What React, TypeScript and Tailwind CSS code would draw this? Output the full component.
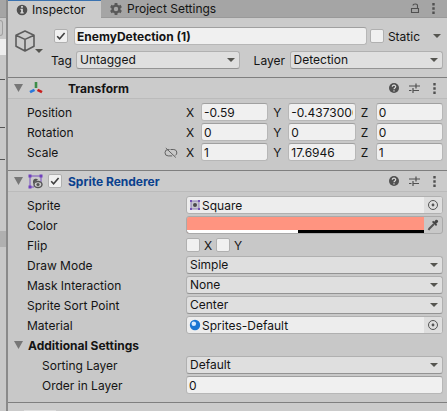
import { useState } from "react";
import type { ReactNode } from "react";

function Arrow({ className = "" }: { className?: string }) {
  return (
    <svg viewBox="0 0 8 4" className={`h-1 w-2 shrink-0 fill-[#555550] ${className}`} aria-hidden="true">
      <path d="M0 0h8L4 4z" />
    </svg>
  );
}

function Tick({ label, checked = false, id }: { label: string; checked?: boolean; id?: string }) {
  const [on, setOn] = useState(checked);
  return (
    <span className="relative flex h-3.5 w-3.5 shrink-0">
      <input
        id={id}
        type="checkbox"
        aria-label={label}
        checked={on}
        onChange={() => setOn(!on)}
        className="h-3.5 w-3.5 appearance-none rounded-xs border border-[#b0b0b0] bg-[#f0f0f0]"
      />
      {on && (
        <svg viewBox="0 0 14 14" className="pointer-events-none absolute inset-0" aria-hidden="true">
          <path d="M3.2 7.2l2.4 2.5 5-5.7" fill="none" stroke="#3f3f3f" strokeWidth="1.6" />
        </svg>
      )}
    </span>
  );
}

function Dropdown({ id, value, grow = "flex-1" }: { id: string; value: string; grow?: string }) {
  return (
    <span className={`relative flex min-w-0 items-center ${grow}`}>
      <select
        id={id}
        defaultValue={value}
        className="h-[18px] w-full appearance-none rounded-[3px] border border-[#b0b0b0] border-b-[#939393] bg-[#dfdfdf] pr-4 pl-[3px] leading-4"
      >
        <option>{value}</option>
      </select>
      <Arrow className="pointer-events-none absolute right-[5px]" />
    </span>
  );
}

function TextBox({ id, label, value, className = "" }: { id?: string; label?: string; value: string; className?: string }) {
  return (
    <input
      id={id}
      aria-label={label}
      defaultValue={value}
      className={`h-[18px] w-0 min-w-0 flex-1 rounded-[3px] border border-[#b7b7b7] border-t-[#a0a0a0] bg-[#f0f0f0] px-0.5 pt-px leading-4 ${className}`}
    />
  );
}

function ObjectField({ id, value, icon }: { id: string; value: string; icon: ReactNode }) {
  return (
    <span className="flex h-[18px] min-w-0 flex-1 items-center overflow-hidden rounded-[3px] border border-[#b0b0b0] bg-[#ededed]">
      <span className="ml-0.5 h-3 w-3 shrink-0">{icon}</span>
      <input id={id} readOnly defaultValue={value} className="h-4 w-0 min-w-0 flex-1 bg-transparent pt-px pl-px leading-4" />
      <button type="button" aria-label={`Select ${value}`} className="flex h-4 w-[18px] items-center justify-center bg-[#dedede]">
        <svg viewBox="0 0 12 12" className="h-3 w-3" aria-hidden="true">
          <circle cx="6" cy="6" r="4.5" fill="none" stroke="#555" />
          <circle cx="6" cy="6" r="1.4" fill="#555" />
        </svg>
      </button>
    </span>
  );
}

function Row({ label, id, indent = false, children }: { label: string; id?: string; indent?: boolean; children: ReactNode }) {
  return (
    <div className="flex h-[18px] items-center">
      <label htmlFor={id} className={`w-[178px] shrink-0 pt-px ${indent ? "pl-[34px]" : "pl-[19px]"}`}>
        {label}
      </label>
      {children}
    </div>
  );
}

function VectorRow({ label, values, link = false }: { label: string; values: string[]; link?: boolean }) {
  return (
    <div role="group" aria-label={label} className="flex h-[18px] items-center">
      <span className="flex w-[178px] shrink-0 items-center justify-between pt-px pr-2 pl-[19px]">
        {label}
        {link && (
          <button type="button" aria-label="Constrain proportions">
            <svg viewBox="0 0 14 12" className="h-3 w-3.5" fill="none" stroke="#626262" aria-hidden="true">
              <path d="M5.5 2.5H4.2a3.2 3.2 0 0 0 0 6.4h4M6.5 2.5h3.3a3.2 3.2 0 0 1 1.4 6M1.8 1l10 9.5" />
            </svg>
          </button>
        )}
      </span>
      <span className="flex min-w-0 flex-1 gap-[5px]">
        {["X", "Y", "Z"].map((axis, i) => (
          <label key={axis} className="flex min-w-0 flex-1 items-center">
            <span className="w-[15px] shrink-0 pt-px">{axis}</span>
            <TextBox value={values[i]} />
          </label>
        ))}
      </span>
    </div>
  );
}

function Dots() {
  return (
    <button type="button" aria-label="More" className="flex w-3 justify-center">
      <svg viewBox="0 0 3 11" className="h-[11px] w-[3px] fill-[#505050]" aria-hidden="true">
        <path d="M.3 0h2.4v2.4H.3zM.3 4.3h2.4v2.4H.3zM.3 8.6h2.4V11H.3z" />
      </svg>
    </button>
  );
}

function Fold({ label }: { label: string }) {
  return (
    <button type="button" aria-label={`Collapse ${label}`} className="flex w-[9px] shrink-0">
      <svg viewBox="0 0 9 8" className="h-2 w-[9px] fill-[#777]" aria-hidden="true">
        <path d="M0 0h9L4.5 8z" />
      </svg>
    </button>
  );
}

function SectionHeader({ title, icon, children, blue = false }: { title: string; icon: ReactNode; children?: ReactNode; blue?: boolean }) {
  return (
    <header className="flex h-[22px] items-center border-t border-t-[#7f7f7f] border-b border-b-[#bbbbbb] bg-[#cbcbcb] pr-[7px] pl-1.5">
      <Fold label={title} />
      <span className="ml-[5px] flex w-10 shrink-0 items-center gap-[5px]">
        {icon}
        {children}
      </span>
      <h2 className={`flex-1 pt-px font-bold ${blue ? "text-[#0a418e]" : ""}`}>{title}</h2>
      <span className="flex items-center gap-2">
        <button type="button" aria-label="Help">
          <svg viewBox="0 0 12 12" className="h-3 w-3" aria-hidden="true">
            <circle cx="6" cy="6" r="5" fill="#505050" />
            <path d="M4.3 4.8c0-2.3 3.5-2.1 3.4 0C7.7 6 6 5.8 6 7.2M6 8.2v1.2" fill="none" stroke="#ddd" strokeWidth="1.2" />
          </svg>
        </button>
        <button type="button" aria-label="Presets">
          <svg viewBox="0 0 12 12" className="h-3 w-3" fill="none" stroke="#505050" strokeWidth="1.2" aria-hidden="true">
            <path d="M1 4h6.5M8 4H12M8 1.5v5M1 8.5h2.5M5 8.5H11M5 6v5" />
          </svg>
        </button>
        <Dots />
      </span>
    </header>
  );
}

function SpriteIcon() {
  return (
    <svg viewBox="0 0 12 12" className="h-3 w-3" aria-hidden="true">
      <path d="M2 2h8v8H2z" fill="#c9c6d2" stroke="#8b7db2" />
      <path d="M1 1h2v2H1zM9 1h2v2H9zM1 9h2v2H1zM9 9h2v2H9z" fill="#7350b5" />
      <circle cx="6" cy="6" r="2" fill="#4a4a4a" />
    </svg>
  );
}

function ScenePanel() {
  return (
    <aside className="flex w-1.5 shrink-0 flex-col bg-[#c8c8c8]">
      <div className="h-[18px] border-b border-[#999] bg-[#a5a5a5]" />
      <div className="mt-[2px] mr-[3px] h-4 rounded-r-md border border-l-0 border-[#a0a0a0]" />
      <div className="mt-[3px] h-4 bg-[#ededed]" />
      <div className="mt-6 h-px w-[5px] bg-[#555]" />
      <div className="mt-[47px] h-px w-[5px] bg-[#555]" />
      <div className="mt-[31px] h-px w-[5px] bg-[#555]" />
      <div className="mt-[71px] h-4 bg-[#b0b0b0]" />
    </aside>
  );
}

export default function App() {
  return (
    <div className="flex min-h-screen bg-[#c8c8c8] font-['Inter',sans-serif] text-xs leading-4 text-[#141414]">
      <ScenePanel />
      <main className="min-w-0 flex-1 border-l-2 border-[#8a8a8a]">
        <nav className="flex h-[18px] items-stretch border-b border-[#999] bg-[#a5a5a5]">
          <button type="button" className="-mb-px flex w-[93px] items-center gap-1 border-t border-[#3a72b0] bg-[#cbcbcb] pl-2 leading-4">
            <svg viewBox="0 0 12 12" className="h-3 w-3 shrink-0" aria-hidden="true">
              <circle cx="6" cy="6" r="5.3" fill="#505050" />
              <path d="M5.1 2h1.8v1.7H5.1zM4.5 4.8h2.4v3.5h.8v1.2H4.3V8.3h.8V6h-.6z" fill="#d8d8d8" />
            </svg>
            Inspector
          </button>
          <button type="button" className="flex items-center gap-1 pt-px pl-2 leading-4">
            <svg viewBox="0 0 14 14" className="h-3.5 w-3.5 shrink-0" fill="none" stroke="#595959" aria-hidden="true">
              <circle cx="7" cy="7" r="3.4" strokeWidth="2.4" />
              <path d="M7 1v2M7 11v2M1.8 4l1.7 1M10.5 9l1.7 1M1.8 10l1.7-1M10.5 5l1.7-1" strokeWidth="2.8" />
            </svg>
            Project Settings
          </button>
          <span className="ml-auto flex items-center gap-[7px] pr-2">
            <button type="button" aria-label="Lock">
              <svg viewBox="0 0 10 11" className="h-[11px] w-2.5" fill="none" stroke="#505050" aria-hidden="true">
                <path d="M1.5 5.5h7v4h-7zM3 2.5c0-2 4.5-2 4.5 0v3" strokeWidth="1.1" />
              </svg>
            </button>
            <Dots />
          </span>
        </nav>

        <section className="flex bg-[#cbcbcb] pt-[9px] pb-2" aria-label="Game object">
          <button type="button" aria-label="Object icon" className="flex h-[26px] w-[43px] shrink-0 items-end pl-1.5">
            <svg viewBox="0 0 22 24" className="h-6 w-[22px] shrink-0" fill="none" stroke="#5c5c5c" strokeWidth="1.6" strokeLinejoin="round" aria-hidden="true">
              <path d="M11 2l9 4.2v11L11 22l-9-4.8v-11zM2 6.2l9 4.2 9-4.2M11 10.4V22" />
            </svg>
            <Arrow className="-ml-px" />
          </button>
          <div className="flex min-w-0 flex-1 flex-col gap-1.5 pr-1">
            <div className="flex h-[18px] items-center pl-[3px]">
              <Tick label="Active" checked />
              <TextBox label="Name" value="EnemyDetection (1)" className="ml-1.5 font-bold" />
              <span className="ml-[3px] flex items-center gap-1">
                <Tick label="Static" id="static" />
                <label htmlFor="static" className="pt-px">Static</label>
              </span>
              <button type="button" aria-label="Static options" className="mr-0.5 ml-[13px]">
                <Arrow />
              </button>
            </div>
            <div className="flex h-[18px] items-center">
              <label htmlFor="tag" className="w-[25px] shrink-0 pt-px">Tag</label>
              <Dropdown id="tag" value="Untagged" grow="flex-16" />
              <label htmlFor="layer" className="w-[50px] shrink-0 pt-px pl-3.5">Layer</label>
              <Dropdown id="layer" value="Detection" grow="flex-15" />
            </div>
          </div>
        </section>

        <section>
          <SectionHeader
            title="Transform"
            icon={
              <svg viewBox="0 0 16 16" className="h-4 w-4 shrink-0" fill="none" strokeWidth="2.6" aria-hidden="true">
                <path d="M8 2v6" stroke="#3c8c48" />
                <path d="M6.5 9.8L2 12.2" stroke="#2878dc" />
                <path d="M9.5 9.8l4.5 2.4" stroke="#c81e1e" />
              </svg>
            }
          />
          <div className="flex flex-col gap-0.5 pt-1 pr-1 pb-[9px]">
            <VectorRow label="Position" values={["-0.59", "-0.4373006", "0"]} />
            <VectorRow label="Rotation" values={["0", "0", "0"]} />
            <VectorRow label="Scale" values={["1", "17.6946", "1"]} link />
          </div>
        </section>

        <section>
          <SectionHeader
            title="Sprite Renderer"
            blue
            icon={
              <svg viewBox="0 0 15 15" className="h-[15px] w-[15px] shrink-0" aria-hidden="true">
                <path d="M2 2h11v7M2 2v11h4" fill="none" stroke="#7950be" />
                <path d="M.5.5h3v3h-3zM11.5.5h3v3h-3zM.5 11.5h3v3h-3z" fill="#7040bd" />
                <path d="M5 7a3 3 0 0 1 5-1.5L7 8l-2 2z" fill="#555" />
                <ellipse cx="10" cy="10.5" rx="4" ry="3" fill="#ccc" stroke="#555" strokeWidth="1.4" />
                <circle cx="10" cy="10.5" r="1.6" fill="#555" />
              </svg>
            }
          >
            <Tick label="Sprite Renderer enabled" checked />
          </SectionHeader>
          <div className="flex flex-col gap-0.5 border-b border-[#7f7f7f] pt-1 pr-1 pb-2">
            <Row label="Sprite" id="sprite">
              <ObjectField id="sprite" value="Square" icon={<SpriteIcon />} />
            </Row>
            <Row label="Color" id="color">
              <span className="flex h-[18px] min-w-0 flex-1 overflow-hidden rounded-[3px] border border-[#aaa]">
                <button id="color" type="button" className="flex flex-1 flex-col bg-[#ff9480]">
                  <span className="mt-auto flex h-[3px] w-full bg-black">
                    <span className="w-[47%] bg-white" />
                  </span>
                </button>
                <button type="button" aria-label="Pick color" className="flex w-[18px] items-center justify-center">
                  <svg viewBox="0 0 12 12" className="h-3 w-3" aria-hidden="true">
                    <path d="M7 5L2.5 9.5l-1 1.5" fill="none" stroke="#555" strokeWidth="2" />
                    <path d="M5 3l4 4 1.2-1.2-1-1 1.6-1.6c1.2-1.3-.9-3.4-2.2-2.2L7.2 2.8l-1-1z" fill="#444" />
                  </svg>
                </button>
              </span>
            </Row>
            <Row label="Flip">
              <span className="flex items-center">
                <Tick label="Flip X" id="flip-x" />
                <label htmlFor="flip-x" className="w-4 pt-px pl-1">X</label>
                <Tick label="Flip Y" id="flip-y" />
                <label htmlFor="flip-y" className="pt-px pl-1">Y</label>
              </span>
            </Row>
            <Row label="Draw Mode" id="draw">
              <Dropdown id="draw" value="Simple" />
            </Row>
            <Row label="Mask Interaction" id="mask">
              <Dropdown id="mask" value="None" />
            </Row>
            <Row label="Sprite Sort Point" id="sort">
              <Dropdown id="sort" value="Center" />
            </Row>
            <Row label="Material" id="material">
              <ObjectField
                id="material"
                value="Sprites-Default"
                icon={
                  <svg viewBox="0 0 12 12" className="h-3 w-3" aria-hidden="true">
                    <circle cx="6" cy="6" r="5.2" fill="#1976d2" />
                    <circle cx="4.8" cy="4.8" r="2.3" fill="#d5ebff" />
                  </svg>
                }
              />
            </Row>
            <div className="flex h-[18px] items-center gap-[5px] pl-1.5">
              <Fold label="Additional Settings" />
              <h3 className="pt-px font-bold">Additional Settings</h3>
            </div>
            <Row label="Sorting Layer" id="sorting" indent>
              <Dropdown id="sorting" value="Default" />
            </Row>
            <Row label="Order in Layer" id="order" indent>
              <TextBox id="order" value="0" />
            </Row>
          </div>
        </section>
        <div className="flex h-[9px] items-end bg-[#cbcbcb] pl-4">
          <div className="h-0.5 w-8 bg-[#dedede]" />
        </div>
      </main>
    </div>
  );
}
